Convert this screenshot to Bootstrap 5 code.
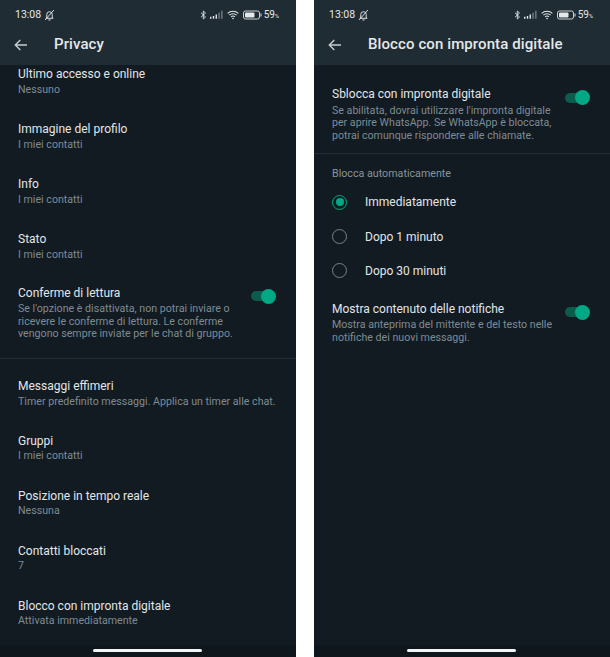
<!DOCTYPE html>
<html lang="it"><head><meta charset="utf-8"><title>Privacy</title>
<link href="https://cdn.jsdelivr.net/npm/bootstrap@5.3.0/dist/css/bootstrap.min.css" rel="stylesheet">
<style>
html,body{background:#fff;margin:0;height:657px;overflow:hidden}
body{font-family:Roboto,"Liberation Sans",sans-serif}
.stage{width:610px;height:657px;gap:18px}
.phone{width:296px;height:657px;background:#121b22;overflow:hidden}
.appbar{background:#202c33;height:65px;flex:none}
.statusrow{height:29px;padding:0 17px 0 15px;font-size:10.5px;color:#e4e8ea}
.timegroup{gap:3px}
.level{font-size:10px}
.toolrow{height:36px;color:#e9edef;padding-bottom:5px}
.backbtn{width:54px;padding-left:14px;flex:none;line-height:0}
.apptitle{font-size:15px;font-weight:500;letter-spacing:.1px;color:#e4e8ea}
.content{flex:1 1 auto;overflow:hidden;min-height:0}
.entry{color:#e4e8ea;padding:0 18px}
.ttl{font-size:12px;line-height:15px;color:#e2e6e8;white-space:nowrap}
.sub{font-size:10.65px;line-height:12.7px;color:#7e8b93;white-space:nowrap}
.pair{height:55px;padding-top:1.5px}
.pair .sub{margin-top:2.5px}
.row-read{height:73px;padding-top:.5px}
.row-eph{height:74.5px;padding-top:20px}
.row-plain{padding-top:0}
.row-plain .sub{margin-top:1.5px}
.row-eph .sub{margin-top:1.5px}
.togglewrap{width:25px;height:15px;position:relative;flex:none;margin-top:3px;margin-right:2px}
.track{position:absolute;left:0;top:2.500px;width:22px;height:10px;border-radius:5px;background:#0b5c4c}
.thumb{position:absolute;right:0;top:0;width:15px;height:15px;border-radius:50%;background:#00a884}
.rule{border-top:1px solid #222d34}
.endbar{height:12px;flex:none;background:#0f171c;padding-top:4px}
.pill{width:109px;height:3px;border-radius:2px;background:#f2f4f5;margin-right:2px}
.sectionlabel{font-size:10.7px;line-height:13px;color:#87949c;padding-top:13px;height:31px}
.radiorow{height:34.4px;font-size:12px;color:#e2e6e8;padding-top:1px}
.dot{width:15px;height:15px;border-radius:50%;border:1.4px solid #75838b;flex:none;margin-right:18px}
.dot.on{border-color:#00a884;position:relative}
.dot.on::after{content:"";position:absolute;inset:2.5px;border-radius:50%;background:#00a884}
.desc{white-space:normal;margin-top:2.500px}
.descwide{width:232px}
.descnarrow{width:226px}
.unlock{padding-top:22px;height:87.5px}
.shownotif{padding-top:14px}
.pct{font-size:5.5px}
.ico-a{margin-left:3px}.ico-b{margin-left:4px}.ico-c{margin-left:2px}
</style></head>
<body>
<div class="stage d-flex">

<section class="phone d-flex flex-column">
<header class="appbar">
<div class="statusrow d-flex align-items-center justify-content-between">
<div class="d-flex align-items-center timegroup"><span>13:08</span>
<svg width="11" height="12" viewBox="0 0 10 11" fill="none" stroke="#dfe3e5" stroke-width=".9"><path d="M1.5 8.5h7M2.5 8.5V5a2.5 2.5 0 0 1 5 0v3.500M4 10h2M1 10 9 1"/></svg></div>
<div class="d-flex align-items-center">
<svg width="7" height="10" viewBox="0 0 7 10" fill="none" stroke="#dfe3e5" stroke-width=".9"><path d="M1 2.800 5.500 7 3.300 9V1l2.200 2L1 7.200"/></svg>
<svg class="ico-a" width="13" height="9" viewBox="0 0 14 9"><path fill="#e4e8ea" d="M0 7h1.500v2H0zM3 6h1.500v3H3zM6 4.500h1.500V9H6z"/><path fill="#737d83" d="M9 2.500h1.500V9H9zM12 0.500h1.500V9H12z"/></svg>
<svg class="ico-b" width="12" height="10" viewBox="0 0 13 10" fill="none" stroke="#e4e8ea" stroke-width="1.100"><path d="M.7 3.200a8.300 8.300 0 0 1 11.600 0M2.600 5.200a5.600 5.600 0 0 1 7.800 0M4.500 7a2.900 2.900 0 0 1 4 0"/><circle cx="6.500" cy="8.800" r=".9" fill="#e4e8ea" stroke="none"/></svg>
<svg class="ico-b" width="19" height="10" viewBox="0 0 19 10"><rect x=".5" y="1" width="16" height="8" rx="2" fill="none" stroke="#dfe3e5" stroke-width=".9"/><rect x="2" y="2.500" width="9.500" height="5" rx="1" fill="#e4e8ea"/><path fill="#dfe3e5" d="M17.500 3.500h1v3h-1z"/></svg>
<span class="ico-c level">59<span class="pct">%</span></span>
</div></div>
<div class="toolrow d-flex align-items-center">
<div class="backbtn"><svg width="14" height="12" viewBox="0 0 14 12" fill="none" stroke="#c5cdd1" stroke-width="1.400"><path d="M13 6H1.500M6.300 1 1.300 6l5 5"/></svg></div>
<div class="apptitle">Privacy</div>
</div>
</header>
<main class="content">
<div class="entry pair"><div class="ttl">Ultimo accesso e online</div><div class="sub">Nessuno</div></div>
<div class="entry pair"><div class="ttl">Immagine del profilo</div><div class="sub">I miei contatti</div></div>
<div class="entry pair"><div class="ttl">Info</div><div class="sub">I miei contatti</div></div>
<div class="entry pair"><div class="ttl">Stato</div><div class="sub">I miei contatti</div></div>
<div class="entry row-read d-flex justify-content-between">
<div><div class="ttl">Conferme di lettura</div><div class="sub desc descnarrow">Se l'opzione è disattivata, non potrai inviare o ricevere le conferme di lettura. Le conferme vengono sempre inviate per le chat di gruppo.</div></div>
<div class="togglewrap"><span class="track"></span><span class="thumb"></span></div>
</div>
<div class="rule"></div>
<div class="entry pair row-eph"><div class="ttl">Messaggi effimeri</div><div class="sub">Timer predefinito messaggi. Applica un timer alle chat.</div></div>
<div class="entry pair row-plain"><div class="ttl">Gruppi</div><div class="sub">I miei contatti</div></div>
<div class="entry pair row-plain"><div class="ttl">Posizione in tempo reale</div><div class="sub">Nessuna</div></div>
<div class="entry pair row-plain"><div class="ttl">Contatti bloccati</div><div class="sub">7</div></div>
<div class="entry pair row-plain"><div class="ttl">Blocco con impronta digitale</div><div class="sub">Attivata immediatamente</div></div>
</main>
<footer class="endbar d-flex justify-content-center"><div class="pill"></div></footer>
</section>

<section class="phone d-flex flex-column">
<header class="appbar">
<div class="statusrow d-flex align-items-center justify-content-between">
<div class="d-flex align-items-center timegroup"><span>13:08</span>
<svg width="11" height="12" viewBox="0 0 10 11" fill="none" stroke="#dfe3e5" stroke-width=".9"><path d="M1.5 8.5h7M2.5 8.5V5a2.5 2.5 0 0 1 5 0v3.500M4 10h2M1 10 9 1"/></svg></div>
<div class="d-flex align-items-center">
<svg width="7" height="10" viewBox="0 0 7 10" fill="none" stroke="#dfe3e5" stroke-width=".9"><path d="M1 2.800 5.500 7 3.300 9V1l2.200 2L1 7.200"/></svg>
<svg class="ico-a" width="13" height="9" viewBox="0 0 14 9"><path fill="#e4e8ea" d="M0 7h1.500v2H0zM3 6h1.500v3H3zM6 4.500h1.500V9H6z"/><path fill="#737d83" d="M9 2.500h1.500V9H9zM12 0.500h1.500V9H12z"/></svg>
<svg class="ico-b" width="12" height="10" viewBox="0 0 13 10" fill="none" stroke="#e4e8ea" stroke-width="1.100"><path d="M.7 3.200a8.300 8.300 0 0 1 11.600 0M2.600 5.200a5.600 5.600 0 0 1 7.800 0M4.500 7a2.900 2.900 0 0 1 4 0"/><circle cx="6.500" cy="8.800" r=".9" fill="#e4e8ea" stroke="none"/></svg>
<svg class="ico-b" width="19" height="10" viewBox="0 0 19 10"><rect x=".5" y="1" width="16" height="8" rx="2" fill="none" stroke="#dfe3e5" stroke-width=".9"/><rect x="2" y="2.500" width="9.500" height="5" rx="1" fill="#e4e8ea"/><path fill="#dfe3e5" d="M17.500 3.500h1v3h-1z"/></svg>
<span class="ico-c level">59<span class="pct">%</span></span>
</div></div>
<div class="toolrow d-flex align-items-center">
<div class="backbtn"><svg width="14" height="12" viewBox="0 0 14 12" fill="none" stroke="#c5cdd1" stroke-width="1.400"><path d="M13 6H1.500M6.300 1 1.300 6l5 5"/></svg></div>
<div class="apptitle">Blocco con impronta digitale</div>
</div>
</header>
<main class="content">
<div class="entry unlock d-flex justify-content-between">
<div><div class="ttl">Sblocca con impronta digitale</div><div class="sub desc descwide">Se abilitata, dovrai utilizzare l'impronta digitale per aprire WhatsApp. Se WhatsApp è bloccata, potrai comunque rispondere alle chiamate.</div></div>
<div class="togglewrap"><span class="track"></span><span class="thumb"></span></div>
</div>
<div class="rule"></div>
<div class="entry sectionlabel">Blocca automaticamente</div>
<div class="entry radiorow d-flex align-items-center"><span class="dot on"></span>Immediatamente</div>
<div class="entry radiorow d-flex align-items-center"><span class="dot"></span>Dopo 1 minuto</div>
<div class="entry radiorow d-flex align-items-center"><span class="dot"></span>Dopo 30 minuti</div>
<div class="entry shownotif d-flex justify-content-between">
<div><div class="ttl">Mostra contenuto delle notifiche</div><div class="sub desc descwide">Mostra anteprima del mittente e del testo nelle notifiche dei nuovi messaggi.</div></div>
<div class="togglewrap"><span class="track"></span><span class="thumb"></span></div>
</div>
</main>
<footer class="endbar d-flex justify-content-center"><div class="pill"></div></footer>
</section>

</div>
</body></html>
